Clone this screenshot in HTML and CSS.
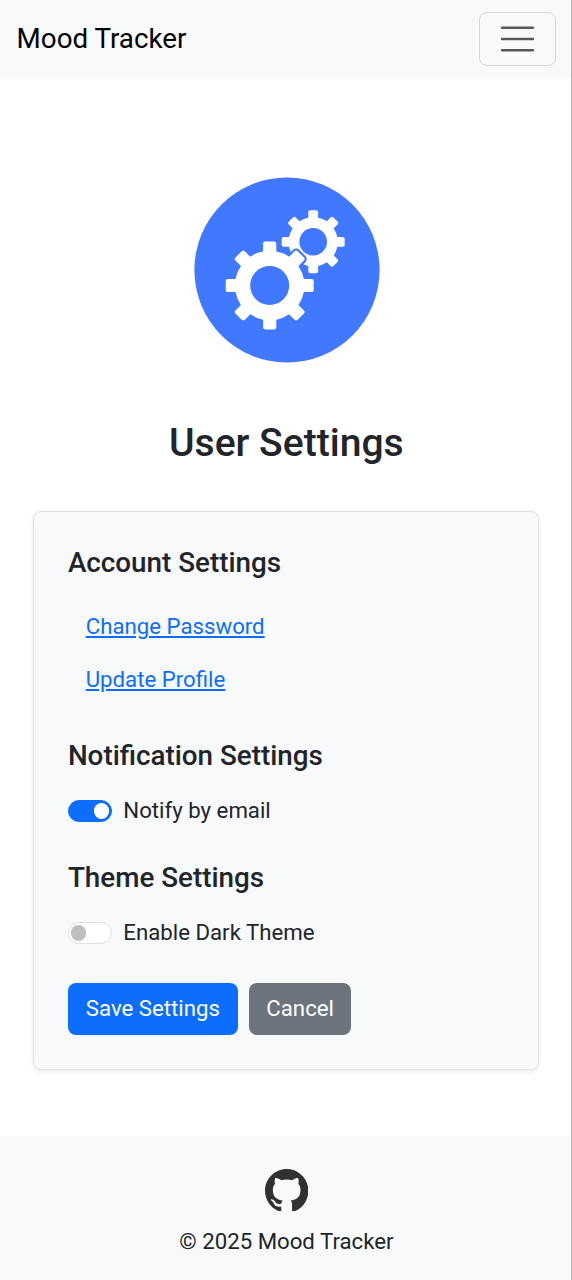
FILE: index.html
```html
<!DOCTYPE html>
<html lang="en">
<head>
<meta charset="utf-8">
<title>Mood Tracker</title>
<link rel="stylesheet" href="styles.css">
</head>
<body>
<nav class="navbar">
  <a class="brand">Mood Tracker</a>
  <button class="toggler" aria-label="Toggle navigation">
    <svg viewBox="0 0 30 30"><path d="M4 7h22M4 15h22M4 23h22" stroke="#55585b" stroke-width="1.8" stroke-linecap="round"/></svg>
  </button>
</nav>
<main class="content">
  <svg class="hero" viewBox="0 0 186 186">
    <defs>
      <g id="big">
        <circle r="34.8"/>
        <g id="big-teeth"><rect x="-6.6" y="-44" width="13.2" height="88" rx="2.2"/><rect x="-44" y="-6.6" width="88" height="13.2" rx="2.2"/></g>
        <use href="#big-teeth" transform="rotate(45)"/>
      </g>
      <g id="small">
        <circle r="24.6"/>
        <g id="small-teeth"><rect x="-4.9" y="-31.5" width="9.8" height="63" rx="2"/><rect x="-31.5" y="-4.9" width="63" height="9.8" rx="2"/></g>
        <use href="#small-teeth" transform="rotate(45)"/>
      </g>
    </defs>
    <circle cx="93" cy="93" r="92.6" fill="#4078ff"/>
    <g transform="translate(119.2 64.8)"><use href="#small" fill="#fff"/><circle r="13.8" fill="#4078ff"/></g>
    <g transform="translate(75.7 108.5)"><use href="#big" fill="#4078ff" stroke="#4078ff" stroke-width="4.4"/><use href="#big" fill="#fff"/><circle r="19.5" fill="#4078ff"/></g>
  </svg>
  <h1 class="title">User Settings</h1>
  <section class="card">
    <h5 class="heading">Account Settings</h5>
    <div class="links">
      <a class="link" href="#">Change Password</a>
      <a class="link" href="#">Update Profile</a>
    </div>
    <h5 class="heading">Notification Settings</h5>
    <label class="option"><span class="switch switch-on"></span>Notify by email</label>
    <h5 class="heading">Theme Settings</h5>
    <label class="option"><span class="switch"></span>Enable Dark Theme</label>
    <div class="actions">
      <button class="btn primary">Save Settings</button>
      <button class="btn secondary">Cancel</button>
    </div>
  </section>
</main>
<footer class="footer">
  <svg class="github" viewBox="0 0 98 96"><path fill="#2f3133" fill-rule="evenodd" d="M48.854 0C21.839 0 0 22 0 49.217c0 21.756 13.993 40.172 33.405 46.69 2.427.49 3.316-1.059 3.316-2.362 0-1.141-.08-5.052-.08-9.127-13.59 2.934-16.42-5.867-16.42-5.867-2.184-5.704-5.42-7.17-5.42-7.17-4.448-3.015.324-3.015.324-3.015 4.934.326 7.523 5.052 7.523 5.052 4.367 7.496 11.404 5.378 14.235 4.074.404-3.178 1.699-5.378 3.074-6.6-10.839-1.141-22.243-5.378-22.243-24.283 0-5.378 1.94-9.778 5.014-13.2-.485-1.222-2.184-6.275.486-13.038 0 0 4.125-1.304 13.426 5.052a46.97 46.97 0 0 1 12.214-1.63c4.125 0 8.33.571 12.213 1.63 9.302-6.356 13.427-5.052 13.427-5.052 2.67 6.763.97 11.816.485 13.038 3.155 3.422 5.015 7.822 5.015 13.2 0 18.905-11.404 23.06-22.324 24.283 1.78 1.548 3.316 4.481 3.316 9.126 0 6.6-.08 11.897-.08 13.526 0 1.304.89 2.853 3.316 2.364 19.412-6.52 33.405-24.935 33.405-46.691C97.707 22 75.788 0 48.854 0z"/></svg>
  <p class="copyright">© 2025 Mood Tracker</p>
</footer>
</body>
</html>
```

FILE: styles.css
```css
* { box-sizing: border-box; margin: 0; }
body {
  position: relative;
  display: flex;
  flex-direction: column;
  height: 1280px;
  background: #fff;
  color: #212529;
  font: 400 22.22px/33.3px Roboto, sans-serif;
}
/* thin edge line along the right side of the viewport */
body::after {
  content: "";
  position: absolute;
  inset: 0 0 0 auto;
  width: 1px;
  background: #b5b7b9;
}
.navbar {
  display: flex;
  align-items: center;
  justify-content: space-between;
  height: 78px;
  padding: 0 16px 0 16.6px;
  background: #f8f9fa;
}
.brand { color: #000; font-size: 27.75px; }
.toggler {
  display: grid;
  place-items: center;
  width: 77px;
  height: 54px;
  padding: 0;
  background: none;
  border: 1px solid #d3d5d7;
  border-radius: 8px;
}
.toggler svg { width: 42px; height: 42px; transform: translateX(-0.5px); }
.content {
  display: flex;
  flex: 1;
  flex-direction: column;
  padding: 99.4px 32.6px 0 33.3px;
}
.hero { width: 186px; height: 186px; margin: 0 auto; transform: translateX(1px); }
.title {
  margin-top: 56.3px;
  font-size: 39.1px;
  line-height: 47px;
  font-weight: 500;
  text-align: center;
}
.card {
  height: 558.6px;
  margin-top: 44.3px;
  padding: 33.6px 33.6px 0;
  background: #f8f9fa;
  border: 1px solid #dee2e6;
  border-radius: 8px;
  box-shadow: 0 2px 5px rgba(0, 0, 0, .075);
}
.heading { font-size: 27.8px; line-height: 33.3px; font-weight: 500; }
.links {
  display: flex;
  flex-direction: column;
  align-items: flex-start;
  margin: 22px 0 34px;
  padding-left: 17.8px;
}
.link {
  padding: 9.5px 0;
  color: #0d6efd;
  text-decoration: underline;
}
.option {
  display: flex;
  align-items: center;
  gap: 11px;
  margin: 21.5px 0 33.8px;
}
.switch {
  display: flex;
  align-items: center;
  width: 44.4px;
  height: 22.2px;
  padding: 0 2px;
  background: #fff;
  border: 1px solid #dee2e6;
  border-radius: 12px;
}
.switch::before {
  content: "";
  width: 15.6px;
  height: 15.6px;
  background: #bfbfbf;
  border-radius: 50%;
}
.switch-on { justify-content: flex-end; background: #0d6efd; border-color: #0d6efd; }
.switch-on::before { background: #fff; }
.actions { display: flex; gap: 11px; }
.btn {
  height: 51.5px;
  border: 0;
  border-radius: 8px;
  padding: 0;
  color: #fff;
  font: inherit;
}
.primary { width: 170px; background: #0d6efd; }
.secondary { width: 102.5px; background: #6c757d; }
.footer {
  display: flex;
  flex-direction: column;
  align-items: center;
  height: 144px;
  padding: 32.6px 0 0 0.8px;
  background: #f8f9fa;
}
.github { width: 43.5px; height: 42.6px; }
.copyright { margin-top: 13.4px; }
```
